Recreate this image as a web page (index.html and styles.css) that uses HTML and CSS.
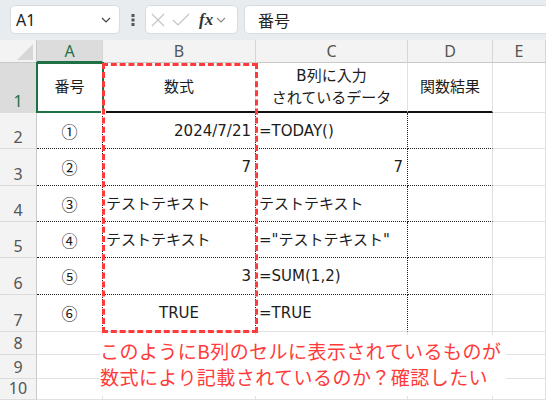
FILE: index.html
```html
<!DOCTYPE html>
<html lang="ja">
<head>
<meta charset="utf-8">
<link rel="stylesheet" href="styles.css">
</head>
<body>
<div class="toolbar">
  <div class="namebox">
    <span>A1</span>
    <svg class="chev" width="10" height="6" viewBox="0 0 10 6"><path d="M1 1l4 4 4-4" fill="none" stroke="#444" stroke-width="1.2"/></svg>
  </div>
  <div class="dots">
    <svg width="4" height="12" viewBox="0 0 4 12"><rect x="0.5" y="0" width="3" height="3" fill="#555"/><rect x="0.5" y="4.5" width="3" height="3" fill="#555"/><rect x="0.5" y="9" width="3" height="3" fill="#555"/></svg>
  </div>
  <div class="fxbox">
    <svg width="14" height="14" viewBox="0 0 14 14"><path d="M1 1l12 12M13 1L1 13" stroke="#c4c4c4" stroke-width="1.2" fill="none"/></svg>
    <svg width="18" height="14" viewBox="0 0 18 14"><path d="M1 7l5 5L17 1" stroke="#c4c4c4" stroke-width="1.2" fill="none"/></svg>
    <span class="fx">fx</span>
    <svg width="10" height="6" viewBox="0 0 10 6"><path d="M1 1l4 4 4-4" fill="none" stroke="#888" stroke-width="1.1"/></svg>
  </div>
  <div class="input">番号</div>
</div>

<div class="sheet">
  <div class="corner"><span class="tri"></span></div>
  <div class="hdr sel">A</div>
  <div class="hdr">B</div>
  <div class="hdr">C</div>
  <div class="hdr">D</div>
  <div class="hdr">E</div>

  <div class="rh sel">1</div>
  <div class="c head ctr">番号</div>
  <div class="c head ctr">数式</div>
  <div class="c head ctr two">B列に入力<br>されているデータ</div>
  <div class="c head ctr">関数結果</div>
  <div class="c"></div>

  <div class="rh">2</div>
  <div class="c d ctr cj">①</div>
  <div class="c d r">2024/7/21</div>
  <div class="c d">=TODAY()</div>
  <div class="c d last"></div>
  <div class="c"></div>

  <div class="rh">3</div>
  <div class="c d ctr cj">②</div>
  <div class="c d r">7</div>
  <div class="c d r">7</div>
  <div class="c d last"></div>
  <div class="c"></div>

  <div class="rh">4</div>
  <div class="c d ctr cj">③</div>
  <div class="c d">テストテキスト</div>
  <div class="c d">テストテキスト</div>
  <div class="c d last"></div>
  <div class="c"></div>

  <div class="rh">5</div>
  <div class="c d ctr cj">④</div>
  <div class="c d">テストテキスト</div>
  <div class="c d">="テストテキスト"</div>
  <div class="c d last"></div>
  <div class="c"></div>

  <div class="rh">6</div>
  <div class="c d ctr cj">⑤</div>
  <div class="c d r">3</div>
  <div class="c d">=SUM(1,2)</div>
  <div class="c d last"></div>
  <div class="c"></div>

  <div class="rh">7</div>
  <div class="c d e ctr cj">⑥</div>
  <div class="c d e ctr">TRUE</div>
  <div class="c d e">=TRUE</div>
  <div class="c d e last"></div>
  <div class="c"></div>

  <div class="rh">8</div>
  <div class="c"></div><div class="c"></div><div class="c"></div><div class="c"></div><div class="c"></div>
  <div class="rh">9</div>
  <div class="c"></div><div class="c"></div><div class="c"></div><div class="c"></div><div class="c"></div>
  <div class="rh">10</div>
  <div class="c"></div><div class="c"></div><div class="c"></div><div class="c"></div><div class="c"></div>

  <div class="selection"><span class="handle"></span></div>
  <div class="redbox"></div>
  <div class="note"><div class="line">このようにB列のセルに表示されているものが</div><div class="line">数式により記載されているのか？確認したい</div></div>
</div>
</body>
</html>
```
FILE: styles.css
```css
* { box-sizing: border-box; }
html, body { margin: 0; padding: 0; }
body {
  width: 546px;
  height: 400px;
  overflow: hidden;
  background: #fff;
  font-family: "Noto Sans CJK JP", "Noto Sans", sans-serif;
  color: #222;
}
.toolbar {
  height: 40px;
  background: #e9ecef;
  display: flex;
  align-items: center;
  padding-left: 10px;
  padding-bottom: 1px;
}
.namebox {
  width: 110px;
  height: 29px;
  background: #fff;
  border: 1px solid #d9dcdf;
  border-radius: 5px;
  display: flex;
  align-items: center;
  justify-content: space-between;
  padding: 0 8px 0 5px;
  font-family: "Noto Sans", sans-serif;
  font-size: 16px;
  color: #222;
}
.dots {
  width: 25px;
  display: flex;
  justify-content: center;
  align-items: center;
}
.fxbox {
  width: 93px;
  height: 29px;
  background: #fff;
  border: 1px solid #d9dcdf;
  border-radius: 5px;
  display: flex;
  align-items: center;
  gap: 7px;
  padding-left: 5px;
}
.fx {
  font-family: "Liberation Serif", serif;
  font-style: italic;
  font-weight: bold;
  font-size: 17px;
  color: #333;
  margin-left: 2px;
  margin-right: -4px;
}
.input {
  margin-left: 6px;
  flex: 1;
  height: 29px;
  background: #fff;
  border: 1px solid #d9dcdf;
  border-right: none;
  border-radius: 5px 0 0 5px;
  display: flex;
  align-items: center;
  padding-left: 13px;
  font-size: 16px;
  color: #222;
}
.sheet {
  position: relative;
  display: grid;
  grid-template-columns: 37px 66px 153px 152px 85px 53px;
  grid-template-rows: 23px 50px 36px 37px 36px 36px 37px 37px 23px 24px 21px;
  font-size: 15px;
}
.corner {
  background: #f3f3f3;
  border-right: 1px solid #c9c9c9;
  border-bottom: 1px solid #c9c9c9;
  position: relative;
}
.tri {
  position: absolute;
  right: 3px;
  bottom: 2px;
  width: 0;
  height: 0;
  border-left: 16px solid transparent;
  border-bottom: 16px solid #d7d7d7;
}
.hdr {
  background: #f3f3f3;
  border-right: 1px solid #d6d6d6;
  border-bottom: 1px solid #c9c9c9;
  display: flex;
  align-items: center;
  justify-content: center;
  font-family: "Noto Sans", sans-serif;
  font-size: 16px;
  color: #555;
}
.hdr.sel {
  background: #dcdcdc;
  color: #1e7145;
  border-bottom: 2px solid #1e7145;
}
.rh {
  background: #f3f3f3;
  border-right: 1px solid #c9c9c9;
  border-bottom: 1px solid #dcdcdc;
  display: flex;
  align-items: flex-end;
  justify-content: center;
  font-family: "Noto Sans", sans-serif;
  font-size: 16px;
  line-height: 22px;
  color: #555;
}
.rh.sel {
  background: #dcdcdc;
  color: #1e7145;
}
.c {
  border-right: 1px solid #e1e1e1;
  border-bottom: 1px solid #e1e1e1;
  display: flex;
  align-items: center;
  padding: 0 3px;
  white-space: nowrap;
  line-height: 22px;
  font-family: "DejaVu Sans", "Noto Sans CJK JP", sans-serif;
  color: #1c1c1c;
}
.c.cj { font-family: "Noto Sans CJK JP", sans-serif; font-size: 16px; }
.c.head { border-bottom: 2px solid #111; }
.c.ctr { justify-content: center; text-align: center; }
.c.r { justify-content: flex-end; padding-right: 4px; }
.c.d {
  border-bottom: 1px dotted #222;
  border-right: 1px dotted #222;
}
.c.d.last { border-right: 1px solid #e1e1e1; }
.c.d.e { border-bottom: 1px solid #e1e1e1; }
.selection {
  position: absolute;
  left: 36px;
  top: 22px;
  width: 68px;
  height: 51px;
  border: 2px solid #1e7145;
}
.handle {
  position: absolute;
  right: -4px;
  bottom: -4px;
  width: 5px;
  height: 5px;
  background: #1e7145;
  border: 1px solid #fff;
}
.redbox {
  position: absolute;
  left: 102px;
  top: 23px;
  width: 156px;
  height: 270px;
  border: 3px dashed #ff3a3a;
}
.note {
  position: absolute;
  left: 100px;
  top: 295px;
  width: 406px;
  height: 61px;
  padding-top: 3px;
  background: #fff;
  color: #ff3a3a;
  font-size: 19px;
  letter-spacing: 0.45px;
  white-space: nowrap;
  display: flex;
  flex-direction: column;
}
.line {
  height: 26px;
  line-height: 26px;
  overflow: visible;
}
```
